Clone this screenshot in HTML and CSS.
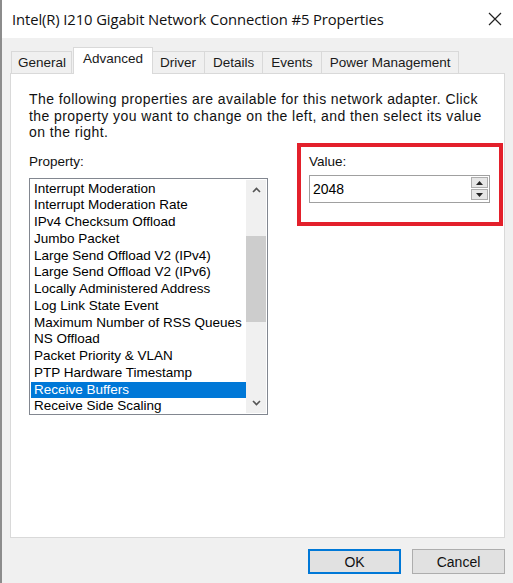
FILE: index.html
```html
<!DOCTYPE html>
<html>
<head>
<meta charset="utf-8">
<link rel="stylesheet" href="styles.css">
</head>
<body>
<div class="window">
  <div class="titlebar">
    <span class="title">Intel(R) I210 Gigabit Network Connection #5 Properties</span>
    <svg class="close" width="14" height="14" viewBox="0 0 14 14"><path d="M1 1 L13 13 M13 1 L1 13" stroke="#222" stroke-width="1.2" fill="none"/></svg>
  </div>
  <div class="body">
    <div class="tabs">
      <div class="tab first">General</div>
      <div class="tab active">Advanced</div>
      <div class="tab">Driver</div>
      <div class="tab">Details</div>
      <div class="tab">Events</div>
      <div class="tab">Power Management</div>
    </div>
    <div class="panel">
      <p class="desc">The following properties are available for this network adapter. Click<br>the property you want to change on the left, and then select its value<br>on the right.</p>
      <div class="cols">
        <div class="propcol">
          <div class="label">Property:</div>
          <div class="listbox">
            <div class="items">
              <div class="item">Interrupt Moderation</div>
              <div class="item">Interrupt Moderation Rate</div>
              <div class="item">IPv4 Checksum Offload</div>
              <div class="item">Jumbo Packet</div>
              <div class="item">Large Send Offload V2 (IPv4)</div>
              <div class="item">Large Send Offload V2 (IPv6)</div>
              <div class="item">Locally Administered Address</div>
              <div class="item">Log Link State Event</div>
              <div class="item">Maximum Number of RSS Queues</div>
              <div class="item">NS Offload</div>
              <div class="item">Packet Priority &amp; VLAN</div>
              <div class="item">PTP Hardware Timestamp</div>
              <div class="item selected">Receive Buffers</div>
              <div class="item">Receive Side Scaling</div>
            </div>
            <div class="scrollbar">
              <svg class="arrow" width="9" height="6" viewBox="0 0 9 6"><path d="M1 5 L4.5 1.5 L8 5" stroke="#555" stroke-width="1.6" fill="none"/></svg>
              <div class="track"><div class="thumb"></div></div>
              <svg class="arrow" width="9" height="6" viewBox="0 0 9 6"><path d="M1 1 L4.5 4.5 L8 1" stroke="#555" stroke-width="1.6" fill="none"/></svg>
            </div>
          </div>
        </div>
        <div class="valuebox">
          <div class="label">Value:</div>
          <div class="spin">
            <span class="spinval">2048</span>
            <div class="spinbtns">
              <div class="sbtn"><svg width="7" height="4" viewBox="0 0 7 4"><path d="M0 4 L3.5 0 L7 4 Z" fill="#222"/></svg></div>
              <div class="sbtn"><svg width="7" height="4" viewBox="0 0 7 4"><path d="M0 0 L3.5 4 L7 0 Z" fill="#222"/></svg></div>
            </div>
          </div>
        </div>
      </div>
    </div>
    <div class="buttons">
      <div class="btn default">OK</div>
      <div class="btn">Cancel</div>
    </div>
  </div>
</div>
</body>
</html>
```
FILE: styles.css
```css
html, body {
  margin: 0;
  padding: 0;
  background: #f0f0f0;
}
.window {
  width: 513px;
  height: 583px;
  box-sizing: border-box;
  border-left: 2px solid #8c8c8c;
  display: flex;
  flex-direction: column;
  font-family: "Liberation Sans", Arial, sans-serif;
  color: #000;
  overflow: hidden;
}
.titlebar {
  height: 38px;
  background: #fff;
  display: flex;
  align-items: center;
  justify-content: space-between;
  padding: 0 11px 0 10px;
  flex: none;
}
.title {
  font-family: "Open Sans", "Noto Sans", sans-serif;
  font-size: 14.8px;
  color: #111;
  letter-spacing: -0.1px;
}
.close {
  margin-top: -1px;
}
.body {
  flex: 1;
  background: #f0f0f0;
  display: flex;
  flex-direction: column;
  padding: 9px 8px 0 8px;
}
.tabs {
  display: flex;
  align-items: flex-end;
  height: 26px;
  font-size: 13.5px;
  padding-left: 1px;
}
.tab {
  height: 22px;
  box-sizing: border-box;
  border: 1px solid #d9d9d9;
  border-bottom: none;
  background: #f0f0f0;
  padding: 3px 8px 0 8px;
  margin-left: -1px;
  color: #1a1a1a;
}
.tab.first {
  margin-left: 0;
  padding: 3px 5px 0 6px;
}
.tab.active {
  height: 27px;
  background: #fff;
  padding: 3px 9px 0 9px;
  margin-left: 1px;
  margin-right: -1px;
  position: relative;
  z-index: 1;
  margin-bottom: -1px;
}
.panel {
  width: 495px;
  height: 465px;
  box-sizing: border-box;
  background: #fff;
  border: 1px solid #d9d9d9;
  padding: 17px 0 0 18px;
}
.desc {
  margin: 0;
  font-size: 14px;
  letter-spacing: 0.42px;
  line-height: 16.5px;
  white-space: nowrap;
  color: #111;
}
.cols {
  display: flex;
  margin-top: 2px;
}
.propcol {
  margin-top: 11px;
}
.label {
  font-size: 13.5px;
  line-height: 16px;
  color: #111;
}
.listbox {
  margin-top: 8px;
  width: 239px;
  height: 237px;
  box-sizing: border-box;
  border: 1px solid #828790;
  display: flex;
  padding: 1px;
}
.items {
  flex: 1;
  font-size: 13.5px;
  padding-top: 1px;
}
.item {
  height: 16.75px;
  line-height: 16.75px;
  padding-left: 3px;
  white-space: nowrap;
}
.item.selected {
  background: #0078d7;
  color: #fff;
}
.scrollbar {
  width: 20px;
  background: #f0f0f0;
  display: flex;
  flex-direction: column;
  align-items: center;
}
.scrollbar .arrow {
  margin: 7px 0;
}
.track {
  flex: 1;
  width: 100%;
}
.thumb {
  margin-top: 36px;
  height: 86px;
  background: #cdcdcd;
}
.valuebox {
  margin-left: 29px;
  width: 206px;
  height: 83px;
  box-sizing: border-box;
  border: 4px solid #e3202b;
  padding: 7px 0 0 8px;
}
.spin {
  margin-top: 5px;
  width: 181px;
  height: 28px;
  box-sizing: border-box;
  border: 1px solid #a0a0a0;
  display: flex;
  justify-content: space-between;
  align-items: center;
  padding: 0 1px 0 3px;
}
.spinval {
  font-size: 14px;
}
.spinbtns {
  display: flex;
  flex-direction: column;
  gap: 1px;
}
.sbtn {
  width: 17px;
  height: 11px;
  box-sizing: border-box;
  border: 1px solid #adadad;
  background: #e6e6e6;
  display: flex;
  align-items: center;
  justify-content: center;
}
.buttons {
  display: flex;
  justify-content: flex-end;
  gap: 11px;
  margin-top: 11px;
}
.btn {
  width: 93px;
  height: 25px;
  box-sizing: border-box;
  border: 1px solid #adadad;
  background: #e1e1e1;
  font-size: 14px;
  display: flex;
  align-items: center;
  justify-content: center;
  color: #111;
}
.btn.default {
  border: 2px solid #0078d7;
}
```
